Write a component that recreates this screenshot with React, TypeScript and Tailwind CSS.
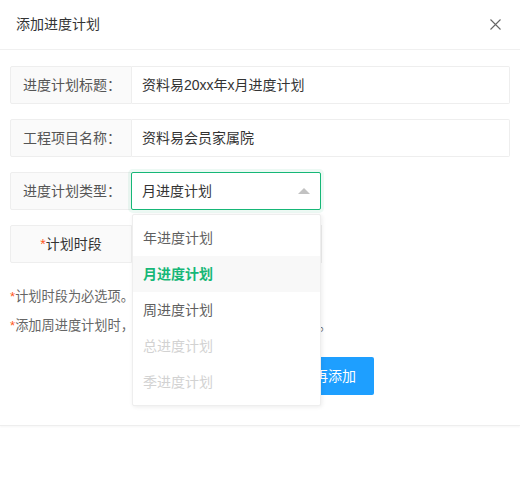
import React, { useState } from 'react';

const options = [
  { label: '年进度计划', disabled: false },
  { label: '月进度计划', disabled: false },
  { label: '周进度计划', disabled: false },
  { label: '总进度计划', disabled: true },
  { label: '季进度计划', disabled: true },
];

function Label({ children, center }: { children: React.ReactNode; center?: boolean }) {
  return (
    <div className={`w-[122px] shrink-0 h-[38px] flex items-center border border-[#eee] bg-[#fafafa] text-[14px] text-[#555] rounded-l-[2px] ${center ? 'justify-center' : 'pl-[12px]'}`}>
      {children}
    </div>
  );
}

export default function App() {
  const [type, setType] = useState('月进度计划');
  const [open, setOpen] = useState(true);

  return (
    <div className="w-[520px] h-[500px] bg-white font-['Liberation_Sans','Noto_Sans_CJK_SC',sans-serif] text-[#333]">
      <div className="border-b border-[#eee] shadow-[0_1px_2px_rgba(0,0,0,0.04)]">
        <div className="h-[50px] flex items-center justify-between pl-[16px] pr-[18px] border-b border-[#f0f0f0]">
          <span className="text-[14px] text-[#333]">添加进度计划</span>
          <button className="w-[14px] h-[14px] flex items-center justify-center">
            <svg width="11" height="11" viewBox="0 0 11 11">
              <path d="M0.5 0.5 L10.5 10.5 M10.5 0.5 L0.5 10.5" stroke="#666" strokeWidth="1.1" fill="none" />
            </svg>
          </button>
        </div>

        <div className="px-[10px] pt-[16px] pb-[30px]">
          <div className="flex mb-[15px]">
            <Label>进度计划标题：</Label>
            <div className="flex-1 h-[38px] flex items-center border border-l-0 border-[#eee] pl-[10px] text-[14px] rounded-r-[2px]">
              资料易20xx年x月进度计划
            </div>
          </div>

          <div className="flex mb-[15px]">
            <Label>工程项目名称：</Label>
            <div className="flex-1 h-[38px] flex items-center border border-l-0 border-[#eee] pl-[10px] text-[14px] rounded-r-[2px]">
              资料易会员家属院
            </div>
          </div>

          <div className="flex mb-[15px]">
            <Label>进度计划类型：</Label>
            <div className="relative w-[190px] -ml-px z-10">
              <div
                onClick={() => setOpen(!open)}
                className="h-[38px] flex items-center justify-between border border-[#16b777] pl-[10px] pr-[10px] text-[14px] rounded-[2px] shadow-[0_0_0_3px_rgba(22,183,119,0.08)] bg-white cursor-pointer"
              >
                <span>{type}</span>
                <span className="w-0 h-0 border-x-[6px] border-x-transparent border-b-[6px] border-b-[#c2c2c2] mb-[1px]" />
              </div>
              {open && (
                <div className="absolute left-px right-0 top-[42px] bg-white border border-[#eee] rounded-[2px] py-[5px] shadow-[1px_1px_4px_rgba(0,0,0,0.08)]">
                  {options.map(o => (
                    <div
                      key={o.label}
                      onClick={() => { if (!o.disabled) { setType(o.label); setOpen(false); } }}
                      className={`h-[36px] leading-[36px] px-[10px] text-[14px] ${
                        o.label === type
                          ? 'bg-[#f8f8f8] text-[#16b777] font-bold'
                          : o.disabled
                          ? 'text-[#d2d2d2]'
                          : 'text-[#5f5f5f]'
                      }`}
                    >
                      {o.label}
                    </div>
                  ))}
                </div>
              )}
            </div>
          </div>

          <div className="flex mb-[15px]">
            <Label center>
              <span className="text-[14px] text-[#333]"><span className="text-[#ff5722]">*</span>计划时段</span>
            </Label>
            <div className="w-[190px] h-[38px] border border-l-0 border-[#eee]" />
          </div>

          <div className="pt-[9px] text-[13.2px] text-[#666]">
            <p className="leading-[20px]"><span className="text-[#ff5722]">*</span>计划时段为必选项。</p>
            <p className="leading-[20px] mt-[9px] whitespace-nowrap"><span className="text-[#ff5722]">*</span>添加周进度计划时，计划时段请选择一周完整时间段。</p>
          </div>

          <div className="flex justify-center gap-[10px] mt-[21px] pr-[4px]">
            <button className="w-[102px] h-[38px] bg-[#16b777] text-white text-[14px] rounded-[2px]">确认添加</button>
            <button className="w-[120px] h-[38px] bg-[#1e9fff] text-white text-[14px] rounded-[2px]">保存并再添加</button>
          </div>
        </div>
      </div>
    </div>
  );
}
